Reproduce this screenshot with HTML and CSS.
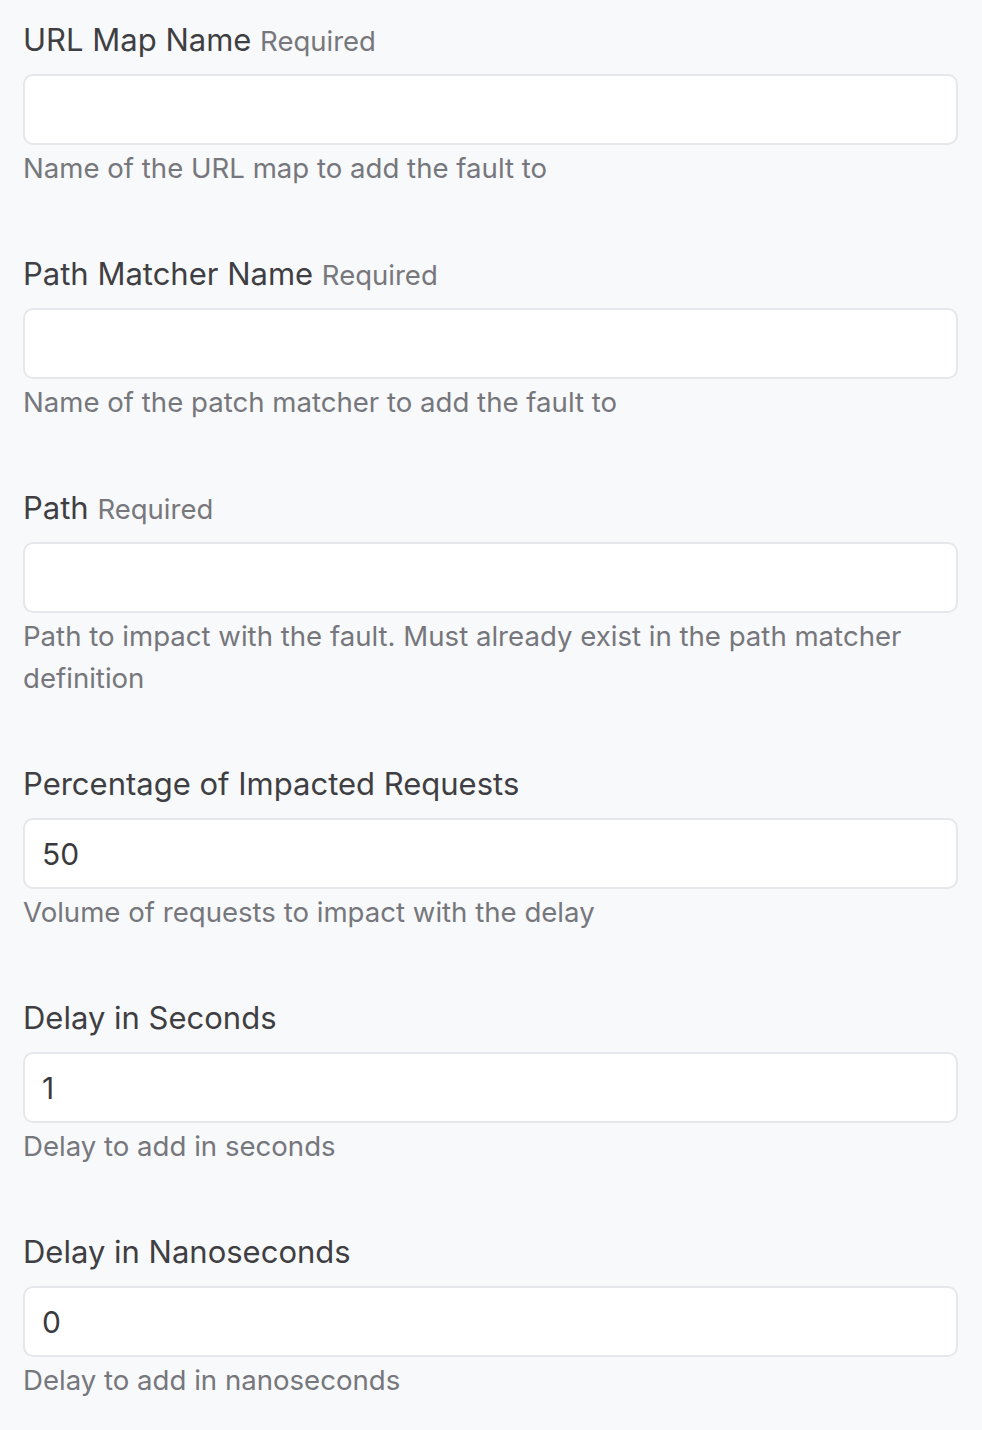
FILE: index.html
```html
<!DOCTYPE html>
<html>
<head>
<meta charset="utf-8">
<link rel="stylesheet" href="styles.css">
</head>
<body>
<form class="form">
  <div class="group">
    <label class="label">URL Map Name <span class="req">Required</span></label>
    <input class="input" type="text" value="">
    <p class="help">Name of the URL map to add the fault to</p>
  </div>
  <div class="group">
    <label class="label">Path Matcher Name <span class="req">Required</span></label>
    <input class="input" type="text" value="">
    <p class="help">Name of the patch matcher to add the fault to</p>
  </div>
  <div class="group">
    <label class="label">Path <span class="req">Required</span></label>
    <input class="input" type="text" value="">
    <p class="help">Path to impact with the fault. Must already exist in the path matcher definition</p>
  </div>
  <div class="group">
    <label class="label">Percentage of Impacted Requests</label>
    <input class="input" type="text" value="50">
    <p class="help">Volume of requests to impact with the delay</p>
  </div>
  <div class="group">
    <label class="label">Delay in Seconds</label>
    <input class="input" type="text" value="1">
    <p class="help">Delay to add in seconds</p>
  </div>
  <div class="group">
    <label class="label">Delay in Nanoseconds</label>
    <input class="input" type="text" value="0">
    <p class="help">Delay to add in nanoseconds</p>
  </div>
</form>
</body>
</html>
```

FILE: styles.css
```css
html, body {
  margin: 0;
  padding: 0;
  background: #f8f9fb;
}
body {
  font-family: Inter, "Noto Sans", sans-serif;
}
.form {
  padding: 17px 24px 0 23px;
  display: flex;
  flex-direction: column;
}
.group {
  display: flex;
  flex-direction: column;
  margin-bottom: 62px;
}
.label {
  display: block;
  font-size: 31px;
  line-height: 45px;
  height: 45px;
  color: #3f3f43;
  margin-bottom: 12px;
}
.req {
  font-size: 27.5px;
  line-height: 1;
  color: #77777c;
}
.input {
  box-sizing: border-box;
  height: 71px;
  width: 100%;
  margin: 0;
  border: 2px solid #e6e7eb;
  border-radius: 10px;
  background: #fff;
  padding: 0 17px;
  font-family: inherit;
  font-size: 30px;
  color: #3a3a3e;
  outline: none;
}
.help {
  margin: 2px 0 0;
  font-size: 27.6px;
  line-height: 42px;
  color: #76777c;
}
```
